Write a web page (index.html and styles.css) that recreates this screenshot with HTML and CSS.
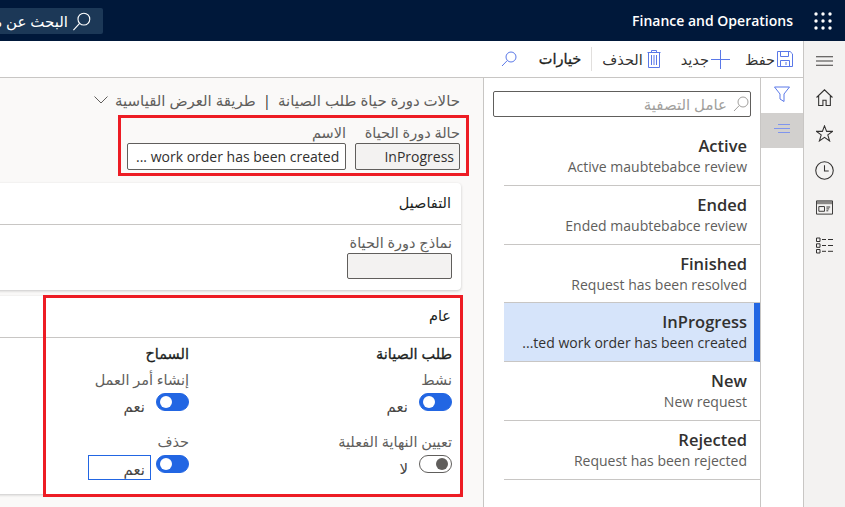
FILE: index.html
```html
<!DOCTYPE html>
<html lang="ar">
<head>
    <meta charset="UTF-8">
    <meta name="viewport" content="width=device-width, initial-scale=1.0">
    <title>Finance and Operations</title>
    <link rel="stylesheet" href="styles.css">
</head>
<body>
    <header class="top-bar">
        <div class="search-box" dir="rtl">
            <svg class="icon-search-top" viewBox="0 0 20 20"><circle cx="12.5" cy="7.5" r="6.2"/><path d="M8 12 1.5 19"/></svg>
            <span>البحث عن منتج</span>
        </div>
        <div class="brand">
            <span>Finance and Operations</span>
            <svg class="waffle" viewBox="0 0 18 18"><g><circle cx="2" cy="2" r="1.7"/><circle cx="9" cy="2" r="1.7"/><circle cx="16" cy="2" r="1.7"/><circle cx="2" cy="9" r="1.7"/><circle cx="9" cy="9" r="1.7"/><circle cx="16" cy="9" r="1.7"/><circle cx="2" cy="16" r="1.7"/><circle cx="9" cy="16" r="1.7"/><circle cx="16" cy="16" r="1.7"/></g></svg>
        </div>
    </header>

    <div class="shell">
        <div class="workspace">
            <div class="toolbar" dir="rtl">
                <div class="tool tool-save">
                    <svg class="tool-icon" viewBox="0 0 16 16"><path d="M.5.500h12.600l2.400 2.400v12.600H.5z"/><path d="M3.500.500v5h8v-5M3.500 15.500v-6h9v6M9 11v3"/></svg>
                    <span>حفظ</span>
                </div>
                <div class="tool tool-new">
                    <svg class="tool-icon icon-plus" viewBox="0 0 19 19"><path d="M9.500 0v19M0 9.500h19"/></svg>
                    <span>جديد</span>
                </div>
                <div class="tool tool-delete">
                    <svg class="tool-icon icon-trash" viewBox="0 0 14 18"><path d="M.5 2.500h13M4.500 2.500V.5h5v2M1.500 2.500v15h11v-15M4.500 5v10M7 5v10M9.500 5v10"/></svg>
                    <span>الحذف</span>
                </div>
                <div class="tool tool-options">خيارات</div>
                <svg class="tool-icon icon-find" viewBox="0 0 16 16"><circle cx="10" cy="6" r="5"/><path d="M6.300 9.500 1 15"/></svg>
            </div>

            <div class="panes">
                <section class="details">
                    <div class="details-title" dir="rtl">
                        <span>حالات دورة حياة طلب الصيانة</span>
                        <span class="sep">|</span>
                        <span>طريقة العرض القياسية</span>
                        <svg class="chevron" viewBox="0 0 14 8"><path d="M.5.500 7 7l6.500-6.500"/></svg>
                    </div>

                    <div class="identity" dir="rtl">
                        <div class="field field-state">
                            <div class="label">حالة دورة الحياة</div>
                            <div class="input input-read">InProgress</div>
                        </div>
                        <div class="field field-name">
                            <div class="label">الاسم</div>
                            <div class="input" dir="ltr">... work order has been created</div>
                        </div>
                    </div>

                    <div class="card card-details" dir="rtl">
                        <div class="card-head">التفاصيل</div>
                        <div class="card-body">
                            <div class="label">نماذج دورة الحياة</div>
                            <div class="input input-read input-empty"></div>
                        </div>
                    </div>

                    <div class="card card-general" dir="rtl">
                        <div class="card-head">عام</div>
                        <div class="columns">
                            <div class="column">
                                <h3>طلب الصيانة</h3>
                                <div class="label">نشط</div>
                                <div class="switch-row"><span class="switch on"></span><span>نعم</span></div>
                                <div class="label label-next">تعيين النهاية الفعلية</div>
                                <div class="switch-row"><span class="switch"></span><span class="switch-no">لا</span></div>
                            </div>
                            <div class="column">
                                <h3>السماح</h3>
                                <div class="label">إنشاء أمر العمل</div>
                                <div class="switch-row"><span class="switch on"></span><span>نعم</span></div>
                                <div class="label label-next">حذف</div>
                                <div class="switch-row"><span class="switch on"></span><span class="focus-value">نعم</span></div>
                            </div>
                        </div>
                        <div class="red-box"></div>
                    </div>
                </section>

                <section class="list-pane">
                    <div class="filter-box" dir="rtl">
                        <svg viewBox="0 0 16 16"><circle cx="10" cy="6" r="5"/><path d="M6.300 9.500 1 15"/></svg>
                        <span>عامل التصفية</span>
                    </div>
                    <ul class="state-list">
                        <li><strong>Active</strong><span>Active maubtebabce review</span></li>
                        <li><strong>Ended</strong><span>Ended maubtebabce review</span></li>
                        <li><strong>Finished</strong><span>Request has been resolved</span></li>
                        <li class="selected"><strong>InProgress</strong><span>...ted work order has been created</span></li>
                        <li><strong>New</strong><span>New request</span></li>
                        <li><strong>Rejected</strong><span>Request has been rejected</span></li>
                    </ul>
                </section>

                <div class="view-rail">
                    <div class="view-btn">
                        <svg viewBox="0 0 16 16"><path d="M.5 1h15L10 8v7.500L6 13V8z"/></svg>
                    </div>
                    <div class="view-btn active">
                        <svg viewBox="0 0 16 9"><path d="M4 .5h12M0 4.500h16M4 8.500h12"/></svg>
                    </div>
                </div>
            </div>
        </div>

        <nav class="nav-rail">
            <svg class="nav-burger" viewBox="0 0 18 10"><path d="M0 .5h18M0 5h18M0 9.500h18"/></svg>
            <svg viewBox="0 0 16 16"><path d="M.5 8 8 .8 15.500 8M2.500 6.500v9h4v-5h3v5h4v-9"/></svg>
            <svg viewBox="0 0 16 16"><path d="M8 .8 10 6h5.500l-4.400 3.300 1.700 5.700L8 11.600 3.200 15l1.700-5.700L.5 6H6z"/></svg>
            <svg class="nav-clock" viewBox="0 0 18 18"><circle cx="9" cy="9" r="8.300"/><path d="M9 4v5.500h4"/></svg>
            <svg viewBox="0 0 18 15"><rect x="1" y="1" width="16" height="3" fill="#8a8886" stroke="none"/><path d="M.5.500h17v14H.5zM3 6.500h6v5H3zM11 7h4M11 9h3M11 11h2"/></svg>
            <svg class="nav-list" viewBox="0 0 17 16"><path d="M.5.500h3.500v3.500H.5zM.5 6.300h3.500v3.500H.5zM.5 12h3.500v3.500H.5zM6 2h4M12 2h5M6 8h4M12 8h5M6 13.800h4M12 13.800h5"/></svg>
        </nav>
    </div>
</body>
</html>
```

FILE: styles.css
```css
* {
    box-sizing: border-box;
    padding: 0;
    margin: 0;
}

html, body {
    height: 100%;
    overflow: hidden;
}

body {
    display: flex;
    flex-direction: column;
    font-family: "Open Sans", "DejaVu Sans", sans-serif;
    font-size: 15px;
    color: #323130;
    background-color: #ffffff;
}

svg {
    display: block;
    fill: none;
    stroke: currentColor;
}

/* top bar */
.top-bar {
    flex: none;
    display: flex;
    align-items: center;
    justify-content: space-between;
    height: 41px;
    background-color: #00183a;
    color: #ffffff;
}

.search-box {
    display: flex;
    align-items: center;
    justify-content: flex-start;
    gap: 4px;
    width: 103px;
    height: 26px;
    margin-top: 1px;
    padding-right: 12px;
    overflow: hidden;
    white-space: nowrap;
    background-color: #1c3857;
    border-radius: 0 2px 2px 0;
}

.icon-search-top {
    flex: none;
    width: 19px;
    height: 19px;
    stroke-width: 1.2;
}

.brand {
    display: flex;
    align-items: center;
    gap: 21px;
    padding-right: 13px;
    font-size: 14px;
    font-weight: 600;
}

.waffle {
    width: 18px;
    height: 18px;
    fill: #ffffff;
    stroke: none;
}

/* shell */
.shell {
    flex: 1;
    display: flex;
    min-height: 0;
}

.workspace {
    flex: 1;
    display: flex;
    flex-direction: column;
    min-width: 0;
}

/* toolbar */
.toolbar {
    flex: none;
    display: flex;
    align-items: center;
    height: 37px;
    padding-right: 10px;
    font-size: 14.5px;
    border-bottom: 1px solid #c8c6c4;
}

.tool {
    display: flex;
    align-items: center;
    gap: 2px;
    color: #323130;
}

.tool-icon {
    flex: none;
    width: 16px;
    height: 16px;
    color: #5a78e8;
}

.tool-new {
    margin-right: 15px;
}

.icon-plus {
    width: 19px;
    height: 19px;
}

.tool-delete {
    margin-right: 20px;
    gap: 4px;
}

.icon-trash {
    width: 14px;
    height: 18px;
}

.tool-options {
    height: 24px;
    line-height: 24px;
    margin-right: 10px;
    padding-right: 10px;
    border-right: 1px solid #e1dfdd;
    color: #201f1e;
    -webkit-text-stroke: 0.3px #201f1e;
}

.icon-find {
    margin-right: 22px;
}

/* panes */
.panes {
    flex: 1;
    display: flex;
    min-height: 0;
}

.details {
    position: relative;
    flex: 1;
    min-width: 0;
    padding: 12px 22px 0 0;
    background-color: #faf9f8;
    border-right: 1px solid #c8c6c4;
}

.details-title {
    display: flex;
    align-items: center;
    gap: 7px;
    height: 20px;
    padding-right: 1px;
    color: #605e5c;
}

.sep {
    color: #323130;
}

.chevron {
    width: 14px;
    height: 8px;
}

.identity {
    display: flex;
    gap: 9px;
    width: 351px;
    height: 61px;
    margin: 5px -8px 0 auto;
    padding: 8px 6px 0 6px;
    border: 3px solid #ed1c24;
}

.label {
    height: 17px;
    line-height: 17px;
    font-size: 14.5px;
    color: #605e5c;
    white-space: nowrap;
}

.identity .label {
    line-height: 14px;
}

.input {
    height: 27px;
    line-height: 25px;
    padding: 0 5px;
    font-size: 14px;
    background-color: #ffffff;
    border: 1px solid #605e5c;
    border-radius: 2px;
    white-space: nowrap;
    overflow: hidden;
}

.input-read {
    background-color: #f3f2f1;
}

.field-state {
    width: 105px;
}

.field-name {
    width: 219px;
}

.field-name .input {
    padding-left: 8px;
}

.card {
    position: relative;
    margin-left: -10px;
    background-color: #ffffff;
    border-radius: 4px;
    box-shadow: 0 1px 3px rgba(0, 0, 0, 0.2);
}

.card-details {
    height: 107px;
    margin-top: 7px;
}

.card-head {
    height: 42px;
    line-height: 40px;
    padding-right: 10px;
    font-size: 14.5px;
    color: #201f1e;
    border-bottom: 1px solid #c8c6c4;
}

.card-body {
    padding: 9px 9px 0 0;
}

.card-body .label {
    height: 19px;
}

.input-empty {
    width: 105px;
    height: 26px;
}

.card-general {
    height: 198px;
    margin-top: 6px;
}

.columns {
    display: flex;
    padding: 7px 9px 0 0;
}

.column {
    flex: none;
    width: 263px;
}

.column h3 {
    height: 17px;
    line-height: 17px;
    font-size: 14.5px;
    font-weight: 400;
    color: #201f1e;
    -webkit-text-stroke: 0.3px #201f1e;
    margin-bottom: 9px;
}

.label-next {
    margin-top: 14px;
}

.switch-row {
    display: flex;
    align-items: flex-start;
    gap: 11px;
    height: 26px;
    margin-top: 5px;
    line-height: 26px;
    color: #484644;
}

.switch {
    position: relative;
    flex: none;
    width: 33px;
    height: 18px;
    border: 1px solid #605e5c;
    border-radius: 9px;
    background-color: #ffffff;
}

.switch::after {
    content: "";
    position: absolute;
    top: 2px;
    right: 3px;
    width: 12px;
    height: 12px;
    border-radius: 50%;
    background-color: #605e5c;
}

.switch.on {
    background-color: #2266e3;
    border-color: #2266e3;
}

.switch.on::after {
    right: auto;
    left: 3px;
    background-color: #ffffff;
}

.focus-value {
    width: 63px;
    height: 25px;
    line-height: 26px;
    margin-right: -6px;
    padding-right: 5px;
    border: 1px solid #2266e3;
}

.red-box {
    position: absolute;
    top: -1px;
    left: 53px;
    width: 420px;
    height: 202px;
    border: 3px solid #ed1c24;
}

/* list */
.list-pane {
    flex: none;
    width: 277px;
    padding: 13px 9px 0 9px;
    border-right: 1px solid #c8c6c4;
    background-color: #ffffff;
}

.filter-box {
    display: flex;
    align-items: center;
    gap: 6px;
    height: 26px;
    padding-right: 1px;
    color: #a19f9d;
    border: 1px solid #605e5c;
    border-radius: 2px;
}

.filter-box svg {
    width: 16px;
    height: 16px;
}

.state-list {
    list-style: none;
    margin: 10px -9px 0 11px;
}

.state-list li {
    display: flex;
    flex-direction: column;
    align-items: flex-end;
    height: 58.8px;
    padding: 0 13px 0 0;
    border-bottom: 1px solid #c8c6c4;
}

.state-list strong {
    margin-top: 8px;
    height: 22px;
    line-height: 22px;
    font-size: 16.5px;
    font-weight: 600;
}

.state-list span {
    height: 20px;
    line-height: 20px;
    font-size: 14px;
    color: #605e5c;
}

.state-list .selected {
    background-color: #d6e4fa;
    border-right: 6px solid #2266e3;
    padding-right: 7px;
}

.state-list .selected span {
    color: #323130;
}

/* small view rail */
.view-rail {
    flex: none;
    width: 42px;
}

.view-btn {
    display: flex;
    align-items: center;
    justify-content: center;
    height: 35px;
    padding-bottom: 4px;
    color: #5a78e8;
}

.view-btn svg {
    width: 16px;
    height: 16px;
}

.view-btn.active {
    padding-bottom: 5px;
    color: #7f95ee;
    background-color: #d2d0ce;
}

.view-btn.active svg {
    height: 9px;
}

/* right nav rail */
.nav-rail {
    flex: none;
    display: flex;
    flex-direction: column;
    align-items: center;
    gap: 19px;
    width: 42px;
    padding-top: 15px;
    color: #323130;
    background-color: #f3f2f1;
    border-left: 1px solid #c8c6c4;
}

.nav-rail svg {
    flex: none;
    width: 17px;
    height: 17px;
}

.nav-rail .nav-burger {
    height: 10px;
    margin-bottom: 4px;
}

.nav-rail .nav-clock {
    width: 19px;
    height: 19px;
}

.nav-rail .nav-list {
    margin-top: 2px;
}
```
